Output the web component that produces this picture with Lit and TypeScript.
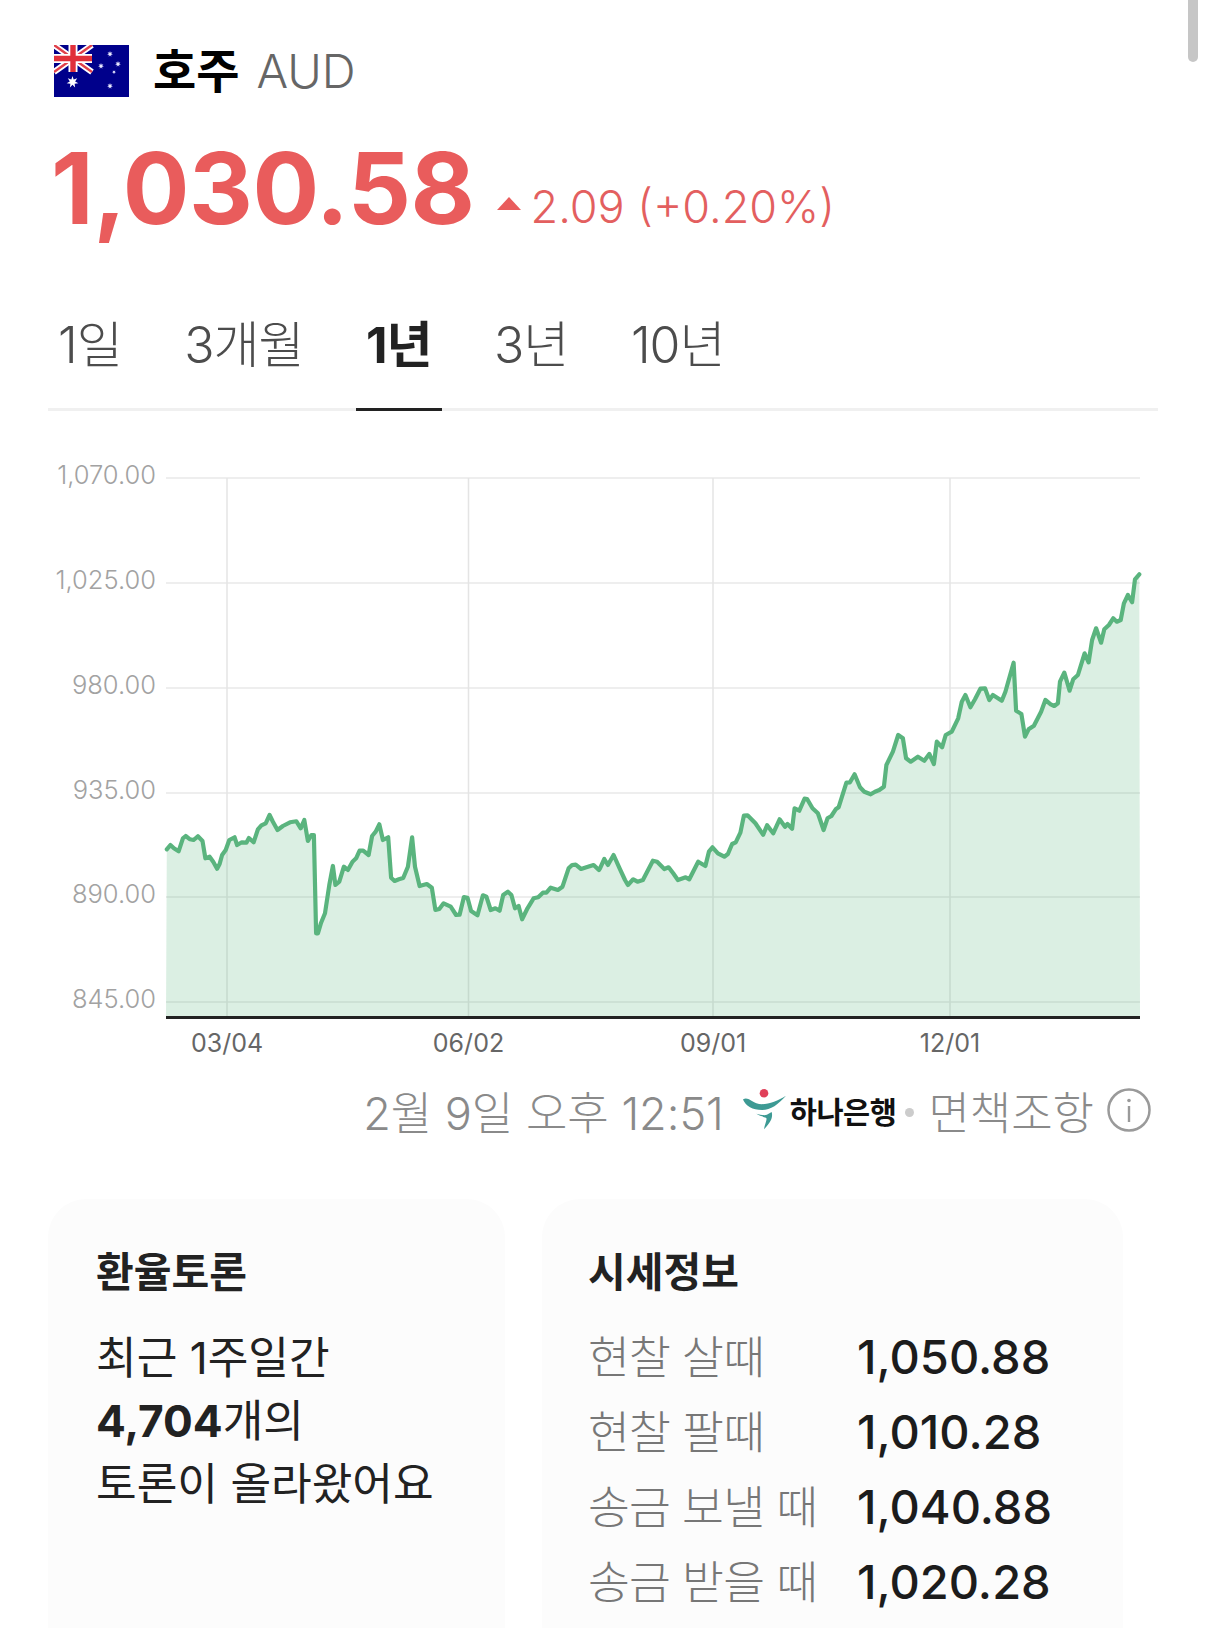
import { LitElement, html, css, svg } from "lit";
import { customElement } from "lit/decorators.js";

const Z4 = [355,268,365,255,375,265,388,274,400,235,408,228,420,238,430,240,442,229,455,243,463,295,475,290,485,305,496,326,503,312,510,285,520,270,530,240,545,232,552,255,565,247,578,248,585,234,598,247,610,208,620,196,632,190,643,165,652,185,665,210,680,198,700,187,718,184,730,205,740,180,750,243,760,225,767,225,773,520,778,520,787,488,798,460,810,375,820,318,827,375,838,365,851,320,862,330,875,305,885,295,895,272,905,272,920,285,930,228,940,215,950,193,960,240,975,232,983,353,993,363,1005,358,1017,354,1030,320,1042,232,1050,320,1063,378,1083,372,1097,383,1107,450,1118,447,1130,430,1150,440,1165,465,1175,464,1187,411,1197,413,1207,453,1225,466,1240,406,1250,410,1262,450,1275,445,1287,452,1297,405,1310,395,1320,405,1330,445,1340,438,1350,478,1365,445,1382,415,1395,412,1408,398,1418,398,1430,383,1450,390,1463,380,1480,325,1490,315,1500,314,1515,327,1530,322,1550,315,1565,330];
const Z5 = [0,985,12,957,22,975,38,945,55,985,70,1020,78,1035,93,1018,105,1025,120,1020,130,1000,148,962,160,965,180,987,192,982,205,1000,218,1020,240,1012,250,1018,275,965,295,978,305,935,315,922,330,940,348,950,358,942,370,912,380,907,393,878,403,827,413,826,435,850,457,884,468,856,485,880,503,838,518,860,525,852,538,866,545,805,558,812,573,776,580,777,595,805,610,820,626,870,637,835,648,828,660,808,668,802,690,728,700,727,713,703,728,742,740,755,758,763,770,755,782,750,795,740,802,675,820,635,835,585,848,595,857,655,870,665,890,650,908,662,922,642,935,672,943,605,958,622,968,585,985,575,1003,535,1013,485,1023,465,1037,502,1050,478,1065,446,1078,445,1090,480,1100,465,1125,482,1135,455,1158,368,1165,512,1180,522,1190,590,1200,568,1215,557,1235,515,1247,480,1262,493,1272,498,1282,490,1288,425,1300,398,1315,452,1325,418,1338,405,1357,340,1368,367,1378,300,1389,265,1403,308,1412,268,1425,255,1437,235,1447,245,1458,240,1467,190,1478,165,1490,187,1498,118,1510,103];

function mapPts(a: number[], ox: number, oy: number): string[] {
  const out: string[] = [];
  for (let i = 0; i < a.length; i += 2) {
    out.push(`${(ox + a[i] / 2.8).toFixed(1)},${(oy + a[i + 1] / 3).toFixed(1)}`);
  }
  return out;
}
const linePts = [...mapPts(Z4, 40, 760), ...mapPts(Z5, 600, 540)].join(" ");
const LEFT = 166, RIGHT = 1140, BASE = 1016;
const areaPts = `${LEFT},${BASE} ${linePts} ${RIGHT},${BASE}`;

const yTicks = [["1,070.00", 478], ["1,025.00", 583], ["980.00", 688], ["935.00", 793], ["890.00", 897], ["845.00", 1002]] as const;
const xTicks = [["03/04", 227], ["06/02", 468.5], ["09/01", 713], ["12/01", 950]] as const;

function star(cx: number, cy: number, r: number, n: number): string {
  const pts: string[] = [];
  for (let i = 0; i < n * 2; i++) {
    const rad = i % 2 ? r * 0.45 : r;
    const t = -Math.PI / 2 + (i * Math.PI) / n;
    pts.push(`${(cx + rad * Math.cos(t)).toFixed(2)},${(cy + rad * Math.sin(t)).toFixed(2)}`);
  }
  return pts.join(" ");
}

const tabs = ["1일", "3개월", "1년", "3년", "10년"];
const rates = [["현찰 살때", "1,050.88"], ["현찰 팔때", "1,010.28"], ["송금 보낼 때", "1,040.88"], ["송금 받을 때", "1,020.28"]];

@customElement("app-root")
export class AppRoot extends LitElement {
  static styles = css`
    :host { display: block; width: 1206px; height: 1628px; overflow: hidden; position: relative; background: #fff;
      font-family: Inter, "Noto Sans CJK KR", sans-serif; color: #222; }
    .scroll { position: absolute; left: 1188px; top: -10px; width: 10px; height: 72px; border-radius: 5px; background: #c6c6c6; }
    .head { display: flex; align-items: center; height: 52px; margin: 45px 0 0 54px; }
    .flag { width: 75px; height: 52px; display: block; }
    .name { font-size: 47px; font-weight: 700; color: #000; margin-left: 24px; line-height: 52px; }
    .code { font-size: 47px; font-weight: 300; color: #666; margin-left: 17px; line-height: 52px; }
    .price { display: flex; align-items: baseline; margin: 38px 0 0 51px; height: 110px; line-height: 106px; color: #e95c5c; }
    .big { font-weight: 700; font-size: 99px; letter-spacing: -0.5px; }
    .tri { width: 24px; height: 13px; margin: 62px 11px 0 22px; display: block; align-self: flex-start; }
    .chg { font-size: 45px; font-weight: 300; color: #e35f5f; position: relative; top: -1px; margin-left: -1px; }
    .tabs { display: flex; gap: 42.5px; margin: 41px 48px 0; height: 125px; box-sizing: border-box; border-bottom: 3px solid #f0f0f0; }
    .tab { padding: 0 10px; height: 125px; box-sizing: border-box; font-size: 50px; line-height: 118px; color: #4c4c4c; font-weight: 300; letter-spacing: -1px; }
    .tab.on { color: #222; font-weight: 700; border-bottom: 3px solid #222; }
    .chart { display: block; margin-top: 39px; }
    .glab { font-size: 25.5px; font-weight: 300; fill: #a2a2a2; text-anchor: end; }
    .xlab { font-size: 25px; font-weight: 400; fill: #666; text-anchor: middle; }
    .foot { display: flex; align-items: center; justify-content: flex-end; height: 60px; margin: 10px 55px 0 0; color: #8a8a8a; font-size: 45px; font-weight: 300; }
    .bank { display: flex; align-items: center; margin-left: 18px; }
    .bank svg { width: 44px; height: 44px; display: block; }
    .bankname { font-size: 29.5px; font-weight: 700; color: #111; letter-spacing: -0.5px; margin-left: 4px; }
    .dot { width: 9px; height: 9px; border-radius: 50%; background: #ccc; margin: 4px 14px 0 9px; }
    .info { width: 44px; height: 44px; margin-left: 13px; display: block; }
    .cards { display: flex; gap: 37px; margin: 59px 0 0 48px; }
    .card { height: 500px; box-sizing: border-box; background: #fcfcfc; border-radius: 38px; padding: 45px 48px; }
    .c1 { width: 457px; }
    .c2 { width: 581px; padding-left: 46px; }
    h3 { margin: 0; font-size: 41px; font-weight: 700; line-height: 56px; color: #222; }
    .disc { margin-top: 27px; font-size: 44.2px; line-height: 63px; color: #222; }
    .disc b { font-weight: 700; }
    .rows { margin-top: 16px; display: flex; flex-direction: column; }
    .row { display: flex; align-items: center; height: 75px; }
    .lab { width: 269px; font-size: 45.5px; color: #777; font-weight: 300; letter-spacing: -0.8px; }
    .val { font-size: 47px; font-weight: 500; color: #1c1c1c; padding-top: 6px; }
  `;

  render() {
    return html`
      <div class="scroll"></div>
      <div class="head">
        <svg class="flag" viewBox="0 0 75 52">
          <rect width="75" height="52" fill="#00008b" />
          <g>
            <path d="M0 0L38 27M38 0L0 27" stroke="#fff" stroke-width="6" />
            <path d="M0 0L38 27M38 0L0 27" stroke="#e0404a" stroke-width="2.4" />
            <path d="M19 0V27M0 13.5H38" stroke="#fff" stroke-width="9" />
            <path d="M19 0V27M0 13.5H38" stroke="#e0303a" stroke-width="5.4" />
          </g>
          <polygon points=${star(18.5, 37, 6, 7)} fill="#fff" />
          ${[[56, 9, 3], [47, 21, 3], [64, 19, 3], [60, 27, 2], [56, 41, 3]].map(
            ([x, y, r]) => svg`<polygon points=${star(x, y, r, 7)} fill="#e8e8ff" />`
          )}
        </svg>
        <span class="name">호주</span><span class="code">AUD</span>
      </div>
      <div class="price">
        <span class="big">1,030.58</span>
        <svg class="tri" viewBox="0 0 24 13"><polygon points="12,0 24,13 0,13" fill="#e95c5c" /></svg>
        <span class="chg">2.09 (+0.20%)</span>
      </div>
      <div class="tabs">
        ${tabs.map((t) => html`<div class="tab ${t === "1년" ? "on" : ""}">${t}</div>`)}
      </div>
      <svg class="chart" width="1206" height="620" viewBox="0 450 1206 620">
        ${yTicks.map(([l, y]) => svg`<line x1=${LEFT} x2=${RIGHT} y1=${y} y2=${y} stroke="#e9e9e9" stroke-width="1.5" />`)}
        ${xTicks.map(([, x]) => svg`<line x1=${x} x2=${x} y1="478" y2=${BASE} stroke="#e4e4e4" stroke-width="1.5" />`)}
        <polygon points=${areaPts} fill="#5ab47e" fill-opacity="0.22" />
        <polyline points=${linePts} fill="none" stroke="#5ab47e" stroke-width="4.2" stroke-linejoin="round" stroke-linecap="round" />
        <line x1=${LEFT} x2=${RIGHT} y1="1017.5" y2="1017.5" stroke="#222" stroke-width="3" />
        ${yTicks.map(([l, y]) => svg`<text class="glab" x="156" y=${y + 6}>${l}</text>`)}
        ${xTicks.map(([l, x]) => svg`<text class="xlab" x=${x} y="1052">${l}</text>`)}
      </svg>
      <div class="foot">
        <span>2월 9일 오후 12:51</span>
        <span class="bank">
          <svg viewBox="0 0 46 44">
            <circle cx="23" cy="4.5" r="4.5" fill="#e0405a" />
            <path d="M1 11C6 8 9 13 15 15C24 18 36 13 46 7C38 16 30 22 21 22C11 22 4 18 1 11Z" fill="#3d9a94" />
            <path d="M15 26C19 27 23 28 26 27L31 24C33 31 28 37 23 42C24 36 27 31 25 30C22 29 18 28 15 26Z" fill="#3d9a94" />
          </svg>
          <span class="bankname">하나은행</span>
        </span>
        <span class="dot"></span>
        <span>면책조항</span>
        <svg class="info" viewBox="0 0 44 44">
          <circle cx="22" cy="22" r="20.5" fill="none" stroke="#9a9a9a" stroke-width="2.5" />
          <rect x="20.8" y="18" width="2.4" height="16" fill="#9a9a9a" />
          <circle cx="22" cy="12.5" r="1.8" fill="#9a9a9a" />
        </svg>
      </div>
      <div class="cards">
        <div class="card c1">
          <h3>환율토론</h3>
          <div class="disc">최근 1주일간<br /><b>4,704</b>개의<br />토론이 올라왔어요</div>
        </div>
        <div class="card c2">
          <h3>시세정보</h3>
          <div class="rows">
            ${rates.map(([l, v]) => html`<div class="row"><span class="lab">${l}</span><span class="val">${v}</span></div>`)}
          </div>
        </div>
      </div>
    `;
  }
}
